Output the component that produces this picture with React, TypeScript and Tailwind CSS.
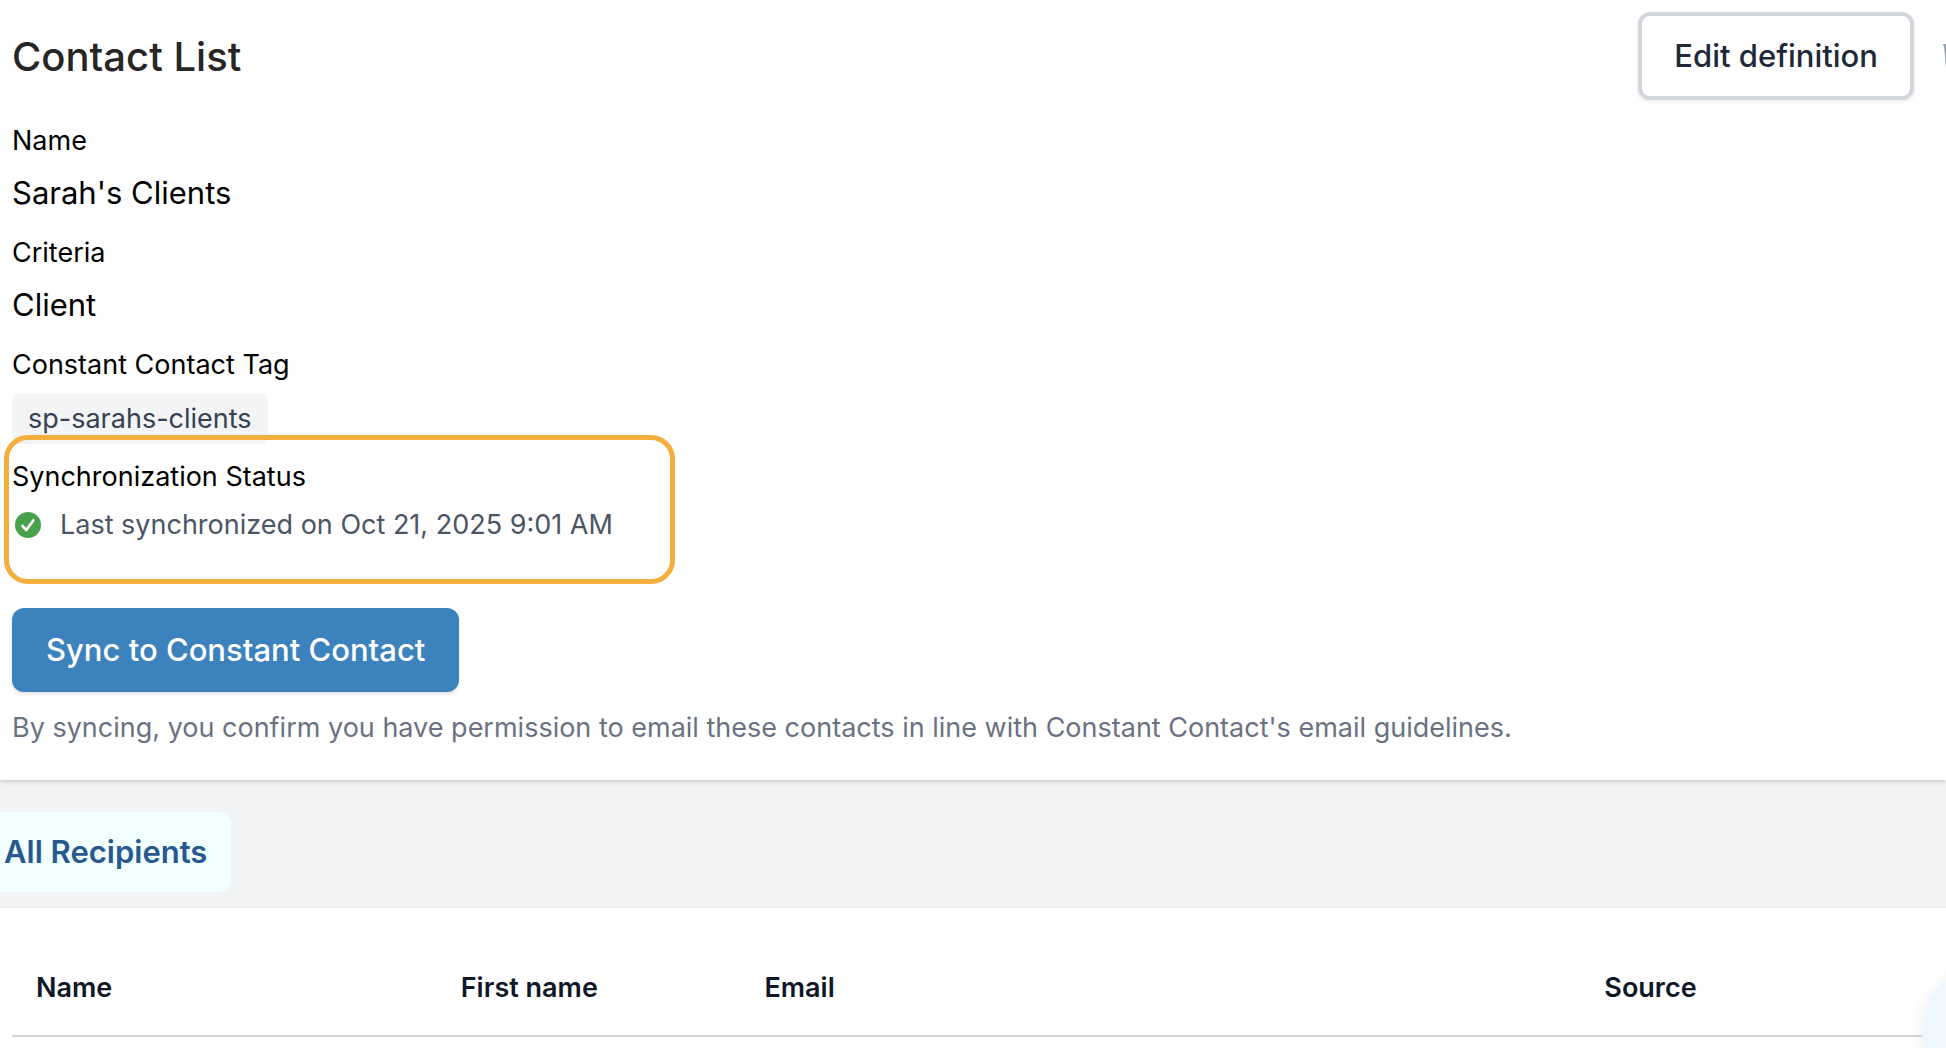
import React from "react";

function Field({ label, children }: { label: string; children: React.ReactNode }) {
  return (
    <div className="flex flex-col gap-2">
      <dt className="text-[27px] leading-10 text-black">{label}</dt>
      <dd className="flex h-12 items-center text-[31px] text-black">{children}</dd>
    </div>
  );
}

export default function App() {
  return (
    <div className="min-h-screen overflow-hidden bg-white font-['Inter',sans-serif]">
      <section className="relative bg-white px-3 pt-3 pb-8 shadow-[0_1px_5px_rgba(0,0,0,0.22)]">
        <header className="flex items-start justify-between">
          <h1 className="pt-5 text-[40px] leading-[50px] font-medium text-[#262626]">Contact List</h1>
          <div className="-mr-10 flex items-center gap-7">
            <button
              type="button"
              className="h-[88px] rounded-xl border-4 border-gray-300 bg-white px-8 text-[31px] font-medium text-gray-800 shadow-[0_2px_4px_rgba(0,0,0,0.08)]"
            >
              Edit definition
            </button>
            <button type="button" aria-label="Delete list" className="w-8 text-gray-400">
              <svg
                viewBox="0 0 32 32"
                className="size-8"
                fill="none"
                stroke="currentColor"
                strokeWidth="2"
                strokeLinecap="round"
                strokeLinejoin="round"
              >
                <path d="M2 5h28M3 5l2 24h22l2-24M11 5V1h10v4" />
              </svg>
            </button>
          </div>
        </header>

        <dl className="mt-[21px] flex flex-col gap-4">
          <Field label="Name">Sarah's Clients</Field>
          <Field label="Criteria">Client</Field>
          <Field label="Constant Contact Tag">
            <span className="mt-1 rounded-lg bg-gray-100 px-4 text-[27px] leading-[50px] text-gray-700">
              sp-sarahs-clients
            </span>
          </Field>
          <div className="relative flex flex-col gap-2">
            <dt className="text-[27px] leading-10 text-black">Synchronization Status</dt>
            <dd className="flex items-center gap-4 text-[27px] leading-10 text-gray-600">
              <svg viewBox="0 0 32 32" className="size-8 shrink-0" aria-hidden="true">
                <circle cx="16" cy="16" r="13" fill="#47a24b" />
                <path
                  d="M10.5 17l3.8 4 7-9.6"
                  fill="none"
                  stroke="white"
                  strokeWidth="2.6"
                  strokeLinecap="round"
                  strokeLinejoin="round"
                />
              </svg>
              Last synchronized on Oct 21, 2025 9:01 AM
            </dd>
            <div className="pointer-events-none absolute -top-[22px] -left-2 h-[149px] w-[671px] rounded-3xl border-[5px] border-[#f4ae3d]" />
          </div>
        </dl>

        <button
          type="button"
          className="mt-[63px] block h-[84px] rounded-xl bg-[#3c82bd] px-[34px] text-[31px] font-medium text-white shadow-[0_2px_4px_rgba(0,0,0,0.12)]"
        >
          Sync to Constant Contact
        </button>
        <p className="mt-4 text-[27px] leading-10 text-gray-500">
          By syncing, you confirm you have permission to email these contacts in line with Constant Contact's email
          guidelines.
        </p>
      </section>

      <nav className="flex bg-[#f2f3f5] pt-8 pb-4">
        <a
          href="#recipients"
          className="rounded-r-xl bg-[#f2ffff] pr-6 pl-1 text-[31px] leading-[80px] font-semibold text-[#27588f]"
        >
          All Recipients
        </a>
      </nav>

      <main className="px-3 pt-8 shadow-[0_-1px_2px_rgba(0,0,0,0.06)]">
        <table className="w-full table-fixed text-left text-[27px] leading-10 text-gray-900">
          <colgroup>
            <col className="w-[22.1%]" />
            <col className="w-[15.8%]" />
            <col className="w-[43.7%]" />
            <col />
          </colgroup>
          <thead>
            <tr className="border-b-2 border-gray-300">
              {["Name", "First name", "Email", "Source"].map((t) => (
                <th key={t} scope="col" className="h-24 px-6 font-semibold">
                  {t}
                </th>
              ))}
            </tr>
          </thead>
        </table>
      </main>

      <button
        type="button"
        aria-label="Open chat"
        className="fixed -right-[104px] -bottom-[46px] size-32 rounded-full bg-[#eff7fe] shadow-[0_2px_16px_rgba(0,0,0,0.08)]"
      />
    </div>
  );
}
